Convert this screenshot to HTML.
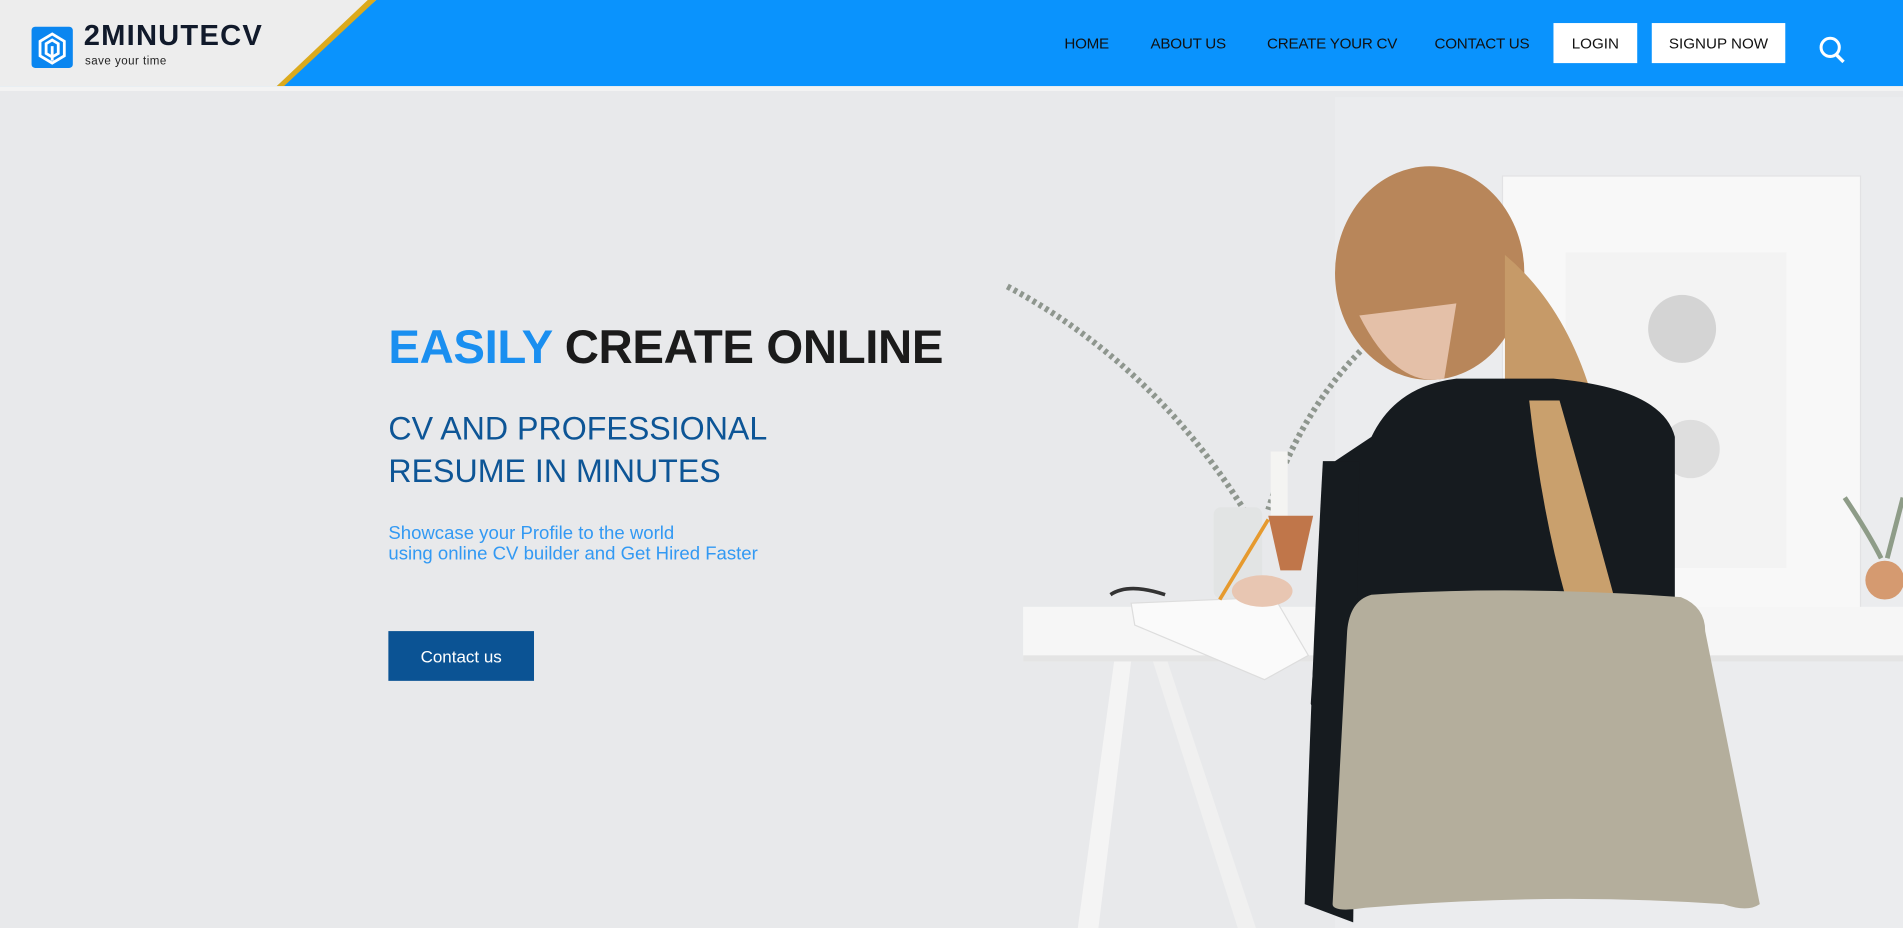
<!DOCTYPE html>
<html><head><meta charset="utf-8"><style>
html,body{margin:0;padding:0;width:1903px;height:928px;overflow:hidden;background:#e9eaec}
#w{position:absolute;left:0;top:0;width:1568px;height:765px;transform:scale(1.21365);transform-origin:0 0;font-family:"Liberation Sans",sans-serif;background:#e8e9eb}
.a{position:absolute;white-space:nowrap}
.nav{position:absolute;top:29px;font-size:12.5px;color:#111;letter-spacing:-0.2px}
.btn{position:absolute;top:19px;height:33px;background:#fff;font-size:12.5px;color:#111;display:flex;align-items:center;justify-content:center}
</style></head><body><div id="w">
<svg class="a" style="left:0;top:0" width="1568" height="765" viewBox="0 0 1568 765">
<rect x="0" y="0" width="1568" height="765" fill="#e8e9eb"/>
<rect x="1100" y="80" width="468" height="685" fill="#ebecee"/>
<!-- frame -->
<rect x="1238" y="145" width="295" height="358" fill="#f8f8f8" stroke="#e2e2e4"/>
<rect x="1290" y="208" width="182" height="260" fill="#f3f3f3"/>
<circle cx="1386" cy="271" r="28" fill="#d4d4d4"/>
<circle cx="1393" cy="370" r="24" fill="#dedede"/>
<!-- plants -->
<path d="M830 236 Q950 300 1025 420" stroke="#8e968e" stroke-width="5" fill="none" stroke-dasharray="3 3"/>
<path d="M1125 285 Q1070 340 1045 420" stroke="#8e968e" stroke-width="5" fill="none" stroke-dasharray="3 3"/>
<rect x="1000" y="418" width="40" height="75" fill="#e2e4e4" rx="6"/>
<rect x="1047" y="372" width="14" height="58" fill="#f4f4f2"/>
<path d="M1045 425 L1082 425 L1072 470 L1055 470Z" fill="#c0764a"/>
<circle cx="1553" cy="478" r="16" fill="#d59a70"/>
<path d="M1520 410 Q1540 440 1550 460 M1568 410 L1555 460" stroke="#8e9c88" stroke-width="4" fill="none"/>
<!-- desk -->
<rect x="843" y="500" width="725" height="45" fill="#f6f6f6"/>
<rect x="843" y="540" width="725" height="5" fill="#e4e4e4"/>
<path d="M918 545 L932 545 L905 765 L888 765Z" fill="#f4f4f4"/>
<path d="M950 545 L962 545 L1035 765 L1020 765Z" fill="#f0f0f0"/>
<!-- hair / head -->
<ellipse cx="1178" cy="225" rx="78" ry="88" fill="#b8865a"/>
<path d="M1120 260 Q1150 320 1190 312 L1200 250Z" fill="#e4c0a8"/>
<path d="M1240 210 Q1300 260 1320 360 Q1335 440 1328 492 L1285 490 Q1265 400 1240 330Z" fill="#c69a68"/>
<!-- body -->
<path d="M1130 360 Q1150 318 1200 312 L1280 312 Q1370 320 1380 360 L1380 500 L1090 600 L1080 580 Q1090 420 1100 380Z" fill="#161b1f"/>
<path d="M1090 380 L1120 380 L1115 760 L1075 745 Q1080 560 1090 380Z" fill="#161b1f"/>
<path d="M1285 330 Q1305 400 1330 492 L1290 492 Q1270 420 1260 330Z" fill="#c9a06d"/>
<!-- book and hand -->
<path d="M932 497 L1050 492 L1078 540 L1042 560 L935 515Z" fill="#fafafa" stroke="#ddd"/>
<ellipse cx="1040" cy="487" rx="25" ry="13" fill="#e8c6b2"/>
<path d="M1005 494 L1045 428" stroke="#e69a2e" stroke-width="3"/>
<path d="M915 490 Q930 480 960 490" stroke="#333" stroke-width="3" fill="none"/>
<!-- chair -->
<path d="M1130 490 Q1250 482 1385 492 Q1405 500 1405 520 L1450 745 Q1440 752 1420 745 Q1275 735 1125 748 Q1098 752 1098 745 L1110 520 Q1112 495 1130 490Z" fill="#b4ae9c"/>
</svg>
<!-- header -->
<svg class="a" style="left:0;top:0" width="1568" height="75" viewBox="0 0 1568 75">
<rect x="0" y="0" width="1568" height="71" fill="#0a93fd"/>
<path d="M0 0 L310 0 L228 71 L0 71Z" fill="#ededed"/>
<path d="M303 0 L310 0 L234 71 L228 71Z" fill="#dcaa1c"/>
<rect x="0" y="71" width="1568" height="4" fill="#f3f3f3"/>
<rect x="26" y="22" width="34" height="34" rx="3" fill="#0a86f0"/>
<path d="M43 28 L53 34 L53 46 L43 52 L33 46 L33 34Z M43 33 L48 36 L48 44 L43 47 L38 44 L38 36Z M43 38 L43 50" stroke="#fff" stroke-width="2.3" fill="none"/>
<circle cx="1508" cy="39" r="7.5" stroke="#fff" stroke-width="2.5" fill="none"/>
<path d="M1513 45 L1519 51" stroke="#fff" stroke-width="2.8"/>
</svg>
<div class="a" style="left:69px;top:16px;font-size:24px;font-weight:bold;color:#111a2b;letter-spacing:1px">2MINUTECV</div>
<div class="a" style="left:70px;top:45px;font-size:9.5px;color:#222;letter-spacing:0.4px">save your time</div>
<div class="nav" style="left:877px">HOME</div>
<div class="nav" style="left:948px">ABOUT US</div>
<div class="nav" style="left:1044px">CREATE YOUR CV</div>
<div class="nav" style="left:1182px">CONTACT US</div>
<div class="btn" style="left:1280px;width:69px">LOGIN</div>
<div class="btn" style="left:1361px;width:110px">SIGNUP NOW</div>
<!-- hero -->
<div class="a" style="left:320px;top:265px;font-size:39px;font-weight:bold;color:#1b1b1b;letter-spacing:-0.3px"><span style="color:#1a8ff0">EASILY</span> CREATE ONLINE</div>
<div class="a" style="left:320px;top:336px;font-size:26.5px;color:#0d5596;line-height:35px">CV AND PROFESSIONAL<br>RESUME IN MINUTES</div>
<div class="a" style="left:320px;top:431px;font-size:15.3px;color:#3299f3;line-height:17px">Showcase your Profile to the world<br>using online CV builder and Get Hired Faster</div>
<div class="a" style="left:320px;top:520px;width:120px;height:41px;background:#0b5394;color:#fff;font-size:14px;display:flex;align-items:center;justify-content:center">Contact us</div>
</div></body></html>
